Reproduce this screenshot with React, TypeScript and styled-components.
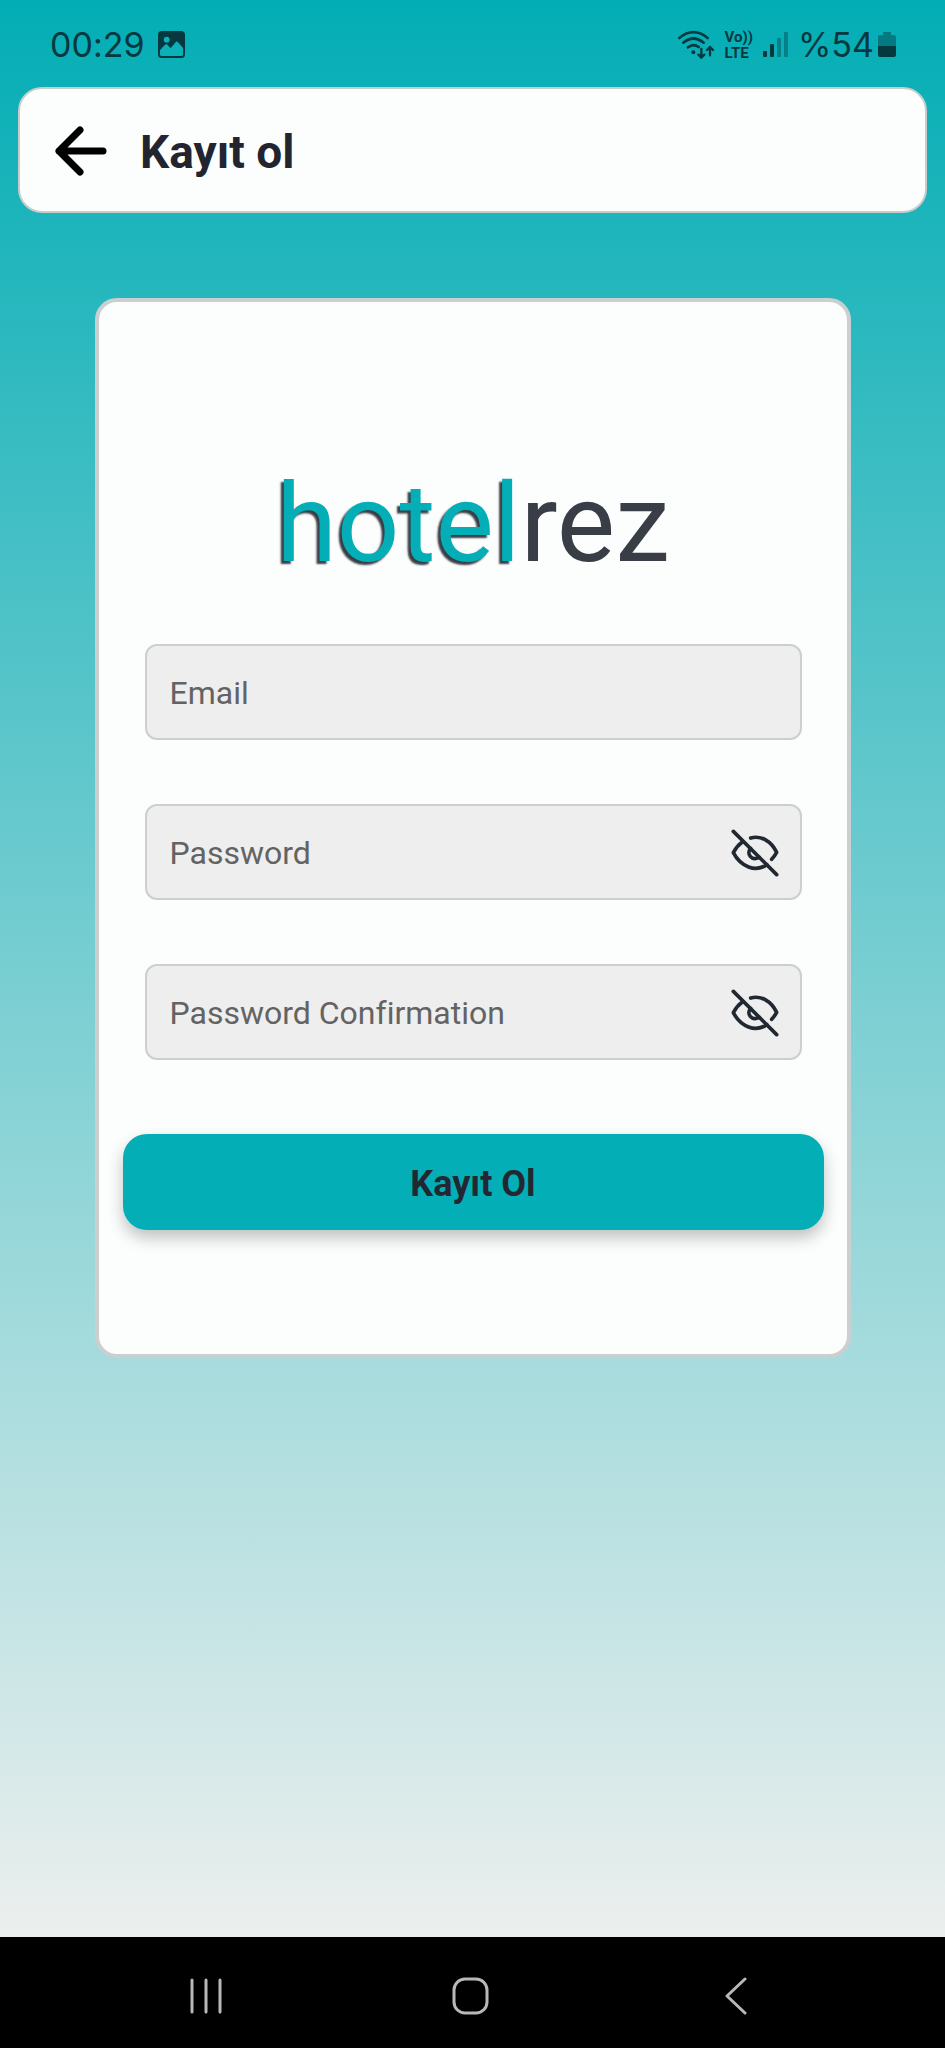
import React, { useState } from "react";
import styled, { createGlobalStyle } from "styled-components";

const teal = "#04aeb7";
const ink = "#222831";
const statusInk = "#05393f";

const GlobalStyle = createGlobalStyle`
  *, *::before, *::after { box-sizing: border-box; }
  body { margin: 0; font-family: Roboto, "Liberation Sans", sans-serif; font-variant-ligatures: none; }
  button, input { font: inherit; font-variant-ligatures: none; }
`;

const Screen = styled.div`
  min-height: 100vh;
  display: flex;
  flex-direction: column;
`;

const Page = styled.div`
  flex: 1;
  display: flex;
  flex-direction: column;
  background: linear-gradient(180deg, #03adb5 0%, #ecefee 100%);
`;

const StatusBar = styled.div`
  height: 87px;
  padding: 2px 49px 0 50px;
  display: flex;
  align-items: center;
  justify-content: space-between;
  color: ${statusInk};
  font-family: Inter, "Liberation Sans", sans-serif;
  font-size: 34px;
  line-height: 40px;
`;

const StatusGroup = styled.div<{ $gap: number }>`
  display: flex;
  align-items: center;
  gap: ${(p) => p.$gap}px;
`;

const Battery = styled.span`
  display: flex;
  align-items: center;
  gap: 4px;
`;

const VoLte = styled.span`
  display: flex;
  flex-direction: column;
  font-family: Roboto, sans-serif;
  font-size: 15px;
  line-height: 16px;
  font-weight: 700;
`;

const Header = styled.header`
  height: 126px;
  margin: 0 18px;
  padding: 2px 34px 0;
  display: flex;
  align-items: center;
  gap: 32px;
  background: #fcfefd;
  border: 2px solid #c8cdcc;
  border-radius: 24px;
`;

const IconButton = styled.button`
  display: flex;
  align-items: center;
  justify-content: center;
  padding: 0;
  border: 0;
  background: none;
  color: inherit;
  cursor: pointer;
`;

const Title = styled.h1`
  margin: 0;
  padding-top: 2px;
  color: #22242f;
  font-size: 46px;
  line-height: 54px;
  font-weight: 700;
`;

const Card = styled.main`
  width: 80%;
  margin: 85px auto 64px;
  padding: 157px 23px 124px 24px;
  background: #fcfdfd;
  border: 4px solid #cccfcf;
  border-radius: 22px;
`;

const Logo = styled.div`
  text-align: center;
  font-size: 110px;
  line-height: 130px;
  color: #393e46;
`;

const LogoAccent = styled.span`
  color: ${teal};
  text-shadow: -3px 3px 2px #393e46;
`;

const Form = styled.form`
  margin-top: 55px;
  display: flex;
  flex-direction: column;
  gap: 64px;
`;

const Field = styled.div`
  height: 96px;
  margin: 0 22px;
  padding: 2px 21px 0 23px;
  display: flex;
  align-items: center;
  background: #eeeeee;
  border: 2px solid #cccfce;
  border-radius: 12px;
  color: ${ink};
`;

const Input = styled.input`
  flex: 1;
  min-width: 0;
  padding: 0;
  border: 0;
  outline: 0;
  background: none;
  color: ${ink};
  font-size: 32px;
  line-height: 40px;
  &::placeholder { color: #636363; opacity: 1; }
`;

const Submit = styled.button`
  height: 96px;
  margin-top: 10px;
  padding: 4px 0 0;
  border: 0;
  border-radius: 24px;
  background: ${teal};
  color: ${ink};
  font-size: 36px;
  line-height: 44px;
  font-weight: 700;
  box-shadow: 0 8px 16px rgba(0, 0, 0, 0.24);
  cursor: pointer;
`;

const NavBar = styled.nav`
  height: 111px;
  padding: 6px 77px 0 73px;
  display: grid;
  grid-template-columns: repeat(3, 1fr);
  background: #000;
  color: #b8b8b8;
`;

const PictureIcon = () => (
  <svg width="27" height="27" viewBox="0 0 28 28">
    <rect width="28" height="28" rx="4" fill="currentColor" />
    <circle cx="9" cy="9" r="3" fill="#0bb0b8" />
    <path d="M2 20 7 14.500Q8.500 13 10 14.500L13 18 18.500 11.500Q19.500 10.500 20.500 11.500L26 17.500V24Q26 26 24 26H4Q2 26 2 24Z" fill="#0bb0b8" />
  </svg>
);

const WifiIcon = () => (
  <svg width="37" height="29" viewBox="55 88 111 87" fill="none" stroke="currentColor" strokeWidth="8" strokeLinecap="round">
    <path d="M59 112Q101 77 144 112M71 126Q101 101 132 126M85 140Q101 127 117 139" />
    <circle cx="101" cy="155" r="6" fill="currentColor" stroke="none" />
    <path d="M125 145V170M116 162L125 171 134 162M151 164V140M142 148L151 139 160 148" strokeWidth="7" />
  </svg>
);

const SignalIcon = () => (
  <svg width="25" height="28" viewBox="0 0 25 28" fill="currentColor">
    <rect x="0" y="20" width="4" height="6" rx="1" />
    <rect x="7" y="13" width="4" height="13" rx="1" />
    <rect x="14" y="7" width="4" height="19" rx="1" opacity=".4" />
    <rect x="21" y="1" width="4" height="25" rx="1" opacity=".4" />
  </svg>
);

const BatteryIcon = () => (
  <svg width="18" height="28" viewBox="0 0 18 28" fill="currentColor">
    <path d="M5 1H13V4H16Q18 4 18 6V15H0V6Q0 4 2 4H5Z" opacity=".45" />
    <path d="M0 15H18V24Q18 26 16 26H2Q0 26 0 24Z" />
  </svg>
);

const BackArrow = () => (
  <svg width="54" height="50" viewBox="0 0 54 50" fill="none" stroke="#000" strokeWidth="7" strokeLinecap="round" strokeLinejoin="round">
    <path d="M49 25H5M26 4 5 25 26 46" />
  </svg>
);

const EyeOffIcon = () => (
  <svg width="48" height="48" viewBox="120 144 144 144" fill="none" stroke="currentColor" strokeWidth="11" strokeLinecap="round" strokeLinejoin="round">
    <path d="M127 151 257 281" />
    <path d="M154 183Q137 195 127 215C149 257 193 275 228 251" />
    <path d="M179 171C210 162 241 181 257 214Q251 225 242 235" />
    <path d="M179 202C165 218 181 241 205 229" />
  </svg>
);

const RecentsIcon = () => (
  <svg width="36" height="38" viewBox="0 0 36 38" fill="none" stroke="currentColor" strokeWidth="3" strokeLinecap="round">
    <path d="M4 3V35M18 3V35M32 3V35" />
  </svg>
);

const HomeIcon = () => (
  <svg width="38" height="38" viewBox="0 0 38 38" fill="none" stroke="currentColor" strokeWidth="3">
    <rect x="2" y="2" width="33" height="34" rx="11" />
  </svg>
);

const NavBackIcon = () => (
  <svg width="24" height="38" viewBox="0 0 24 38" fill="none" stroke="currentColor" strokeWidth="3" strokeLinecap="round" strokeLinejoin="round">
    <path d="M21 2 3 19 21 36" />
  </svg>
);

function PasswordField({ label }: { label: string }) {
  const [visible, setVisible] = useState(false);
  return (
    <Field>
      <Input type={visible ? "text" : "password"} placeholder={label} aria-label={label} />
      <IconButton type="button" aria-label={`${label} visibility`} onClick={() => setVisible(!visible)}>
        <EyeOffIcon />
      </IconButton>
    </Field>
  );
}

export default function App() {
  return (
    <Screen>
      <GlobalStyle />
      <Page>
        <StatusBar>
          <StatusGroup $gap={13}>
            <time>00:29</time>
            <PictureIcon />
          </StatusGroup>
          <StatusGroup $gap={10}>
            <WifiIcon />
            <VoLte>
              <span>Vo))</span>
              <span>LTE</span>
            </VoLte>
            <SignalIcon />
            <Battery>
              %54
              <BatteryIcon />
            </Battery>
          </StatusGroup>
        </StatusBar>
        <Header>
          <IconButton type="button" aria-label="Geri">
            <BackArrow />
          </IconButton>
          <Title>Kayıt ol</Title>
        </Header>
        <Card>
          <Logo>
            <LogoAccent>hotel</LogoAccent>rez
          </Logo>
          <Form onSubmit={(e) => e.preventDefault()}>
            <Field>
              <Input type="email" placeholder="Email" aria-label="Email" />
            </Field>
            <PasswordField label="Password" />
            <PasswordField label="Password Confirmation" />
            <Submit type="submit">Kayıt Ol</Submit>
          </Form>
        </Card>
      </Page>
      <NavBar>
        <IconButton type="button" aria-label="Recents">
          <RecentsIcon />
        </IconButton>
        <IconButton type="button" aria-label="Home">
          <HomeIcon />
        </IconButton>
        <IconButton type="button" aria-label="Back">
          <NavBackIcon />
        </IconButton>
      </NavBar>
    </Screen>
  );
}
